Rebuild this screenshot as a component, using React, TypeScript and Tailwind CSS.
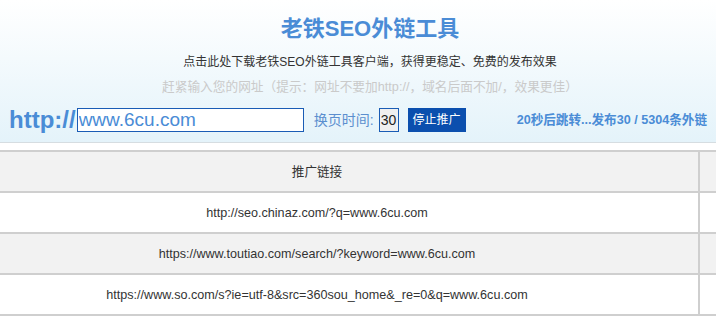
import React from 'react';

const links = [
  'http://seo.chinaz.com/?q=www.6cu.com',
  'https://www.toutiao.com/search/?keyword=www.6cu.com',
  'https://www.so.com/s?ie=utf-8&src=360sou_home&_re=0&q=www.6cu.com',
];

function Row({ text, shaded }: { text: string; shaded?: boolean }) {
  return (
    <div className={`flex border-t-2 border-[#cfcfcf] h-[41px] ${shaded ? 'bg-[#f2f2f2]' : 'bg-white'}`}>
      <div className="w-[700px] shrink-0 border-r-2 border-[#cfcfcf] pr-[64px] pt-[2px] flex items-center justify-center text-[12.6px] text-[#333]">
        {text}
      </div>
      <div className="w-[100px] shrink-0" />
    </div>
  );
}

export default function App() {
  const [url, setUrl] = React.useState('www.6cu.com');
  const [secs, setSecs] = React.useState('30');

  return (
    <div className="w-[716px] h-[316px] overflow-hidden bg-white font-['Liberation_Sans','Noto_Sans_CJK_SC',sans-serif]">
      <div className="h-[143px] border-b border-[#d6dde1] bg-gradient-to-b from-white to-[#e4f3fa] flex flex-col items-center pl-[24px]">
        <h1 className="mt-[13px] text-[22px] leading-[32px] font-bold text-[#4a8cd6]">老铁SEO外链工具</h1>
        <p className="mt-[7px] text-[12px] leading-[20px] text-[#333]">
          点击此处下载老铁SEO外链工具客户端，获得更稳定、免费的发布效果
        </p>
        <p className="mt-[5px] text-[12.7px] leading-[20px] text-[#cacaca]">
          赶紧输入您的网址（提示：网址不要加http://，域名后面不加/，效果更佳）
        </p>
        <div className="mt-[11px] -ml-[24px] w-[716px] flex items-center h-[24px] pl-[9px]">
          <span className="text-[24px] leading-[24px] font-bold text-[#4a8cd6]">http://</span>
          <input
            value={url}
            onChange={e => setUrl(e.target.value)}
            className="ml-[1px] w-[227px] h-[24px] border border-[#1a5cb5] bg-white px-[1px] text-[19px] leading-[22px] text-[#4a8cd6] outline-none"
          />
          <span className="ml-[10px] text-[14px] text-[#5b8fcf]">换页时间:</span>
          <input
            value={secs}
            onChange={e => setSecs(e.target.value)}
            className="ml-[5px] w-[20px] h-[24px] border border-[#1a5cb5] bg-[#f0f0f0] text-center text-[14px] text-[#222] outline-none"
          />
          <button className="ml-[9px] w-[58px] h-[24px] bg-[#0b4fae] text-white text-[12px]">停止推广</button>
          <span className="ml-auto mr-[9px] text-[12.6px] font-bold text-[#4a8cd6]">20秒后跳转...发布30 / 5304条外链</span>
        </div>
      </div>
      <div className="mt-[7px]">
        <Row text="推广链接" shaded />
        {links.map((l, i) => (
          <Row key={l} text={l} shaded={i % 2 === 1} />
        ))}
        <div className="border-t-2 border-[#cfcfcf]" />
      </div>
    </div>
  );
}
